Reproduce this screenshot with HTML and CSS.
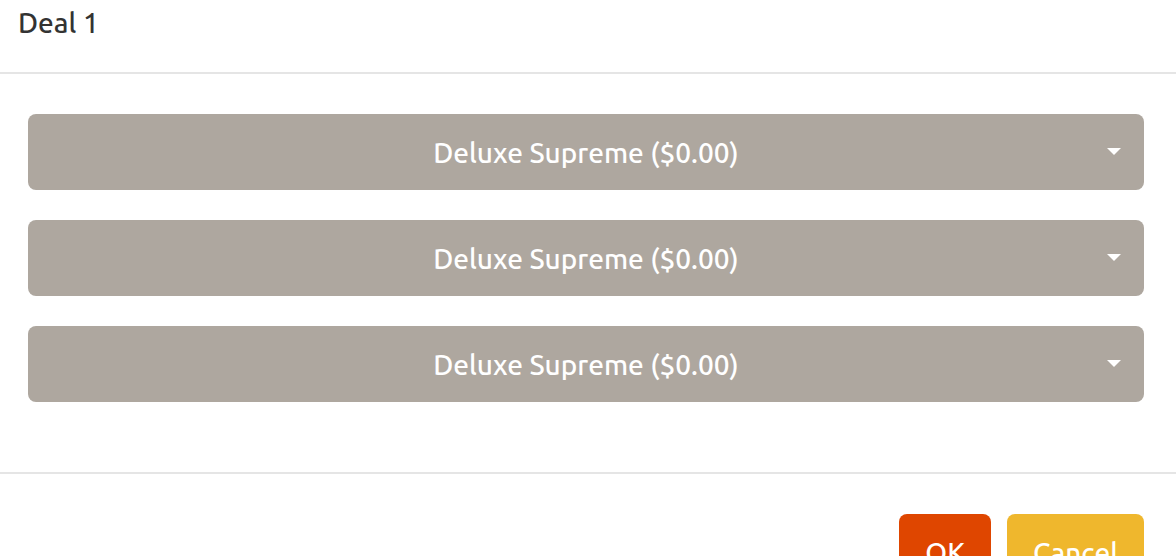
FILE: index.html
```
<!DOCTYPE html>
<html lang="en">
<head>
    <meta charset="UTF-8">
    <meta name="viewport" content="width=device-width, initial-scale=1.0">
    <title>Deal 1</title>
    <link rel="stylesheet" href="styles.css">
</head>
<body>
    <form class="modal">
        <div class="modal-header">
            <h1 class="modal-title">Deal 1</h1>
        </div>

        <div class="modal-body">
            <div class="dropdown">
                <select class="dropdown-select" name="item1" aria-label="Item 1">
                    <option>Deluxe Supreme ($0.00)</option>
                </select>
                <span class="caret"></span>
            </div>

            <div class="dropdown">
                <select class="dropdown-select" name="item2" aria-label="Item 2">
                    <option>Deluxe Supreme ($0.00)</option>
                </select>
                <span class="caret"></span>
            </div>

            <div class="dropdown">
                <select class="dropdown-select" name="item3" aria-label="Item 3">
                    <option>Deluxe Supreme ($0.00)</option>
                </select>
                <span class="caret"></span>
            </div>
        </div>

        <div class="modal-footer">
            <button type="submit" class="btn btn-primary">OK</button>
            <button type="button" class="btn btn-warning">Cancel</button>
        </div>
    </form>
</body>
</html>
```

FILE: styles.css
```
body {
    margin: 0;
    background-color: #fff;
    color: #333;
    font-family: Ubuntu, "Noto Sans", sans-serif;
    font-size: 28px;
    font-weight: 500;
    line-height: 40px;
}

.modal-header {
    padding: 3px 18px 29px;
    border-bottom: 2px solid #e5e5e5;
}

.modal-title {
    margin: 0;
    font-size: 28px;
    font-weight: 500;
    line-height: 40px;
}

.modal-body {
    padding: 40px 32px 40px 28px;
}

.dropdown {
    position: relative;
    margin-bottom: 30px;
}

.dropdown-select {
    display: block;
    width: 100%;
    height: 76px;
    padding: 2px 40px 0;
    border: none;
    border-radius: 8px;
    background-color: #aea79f;
    color: #fff;
    font: inherit;
    text-align: center;
    text-align-last: center;
    appearance: none;
    cursor: pointer;
}

/* small arrow at the right end of the select */
.caret {
    position: absolute;
    top: 34px;
    right: 23px;
    border-top: 7px solid #fff;
    border-left: 7px solid transparent;
    border-right: 7px solid transparent;
    pointer-events: none;
}

.modal-footer {
    display: flex;
    justify-content: flex-end;
    gap: 16px;
    padding: 40px 32px 40px 28px;
    border-top: 2px solid #e5e5e5;
}

.btn {
    padding: 19px 26px 17px;
    border: none;
    border-radius: 8px;
    color: #fff;
    font: inherit;
    cursor: pointer;
}

.btn-primary {
    background-color: #df4600;
}

.btn-warning {
    background-color: #efb72d;
}
```
